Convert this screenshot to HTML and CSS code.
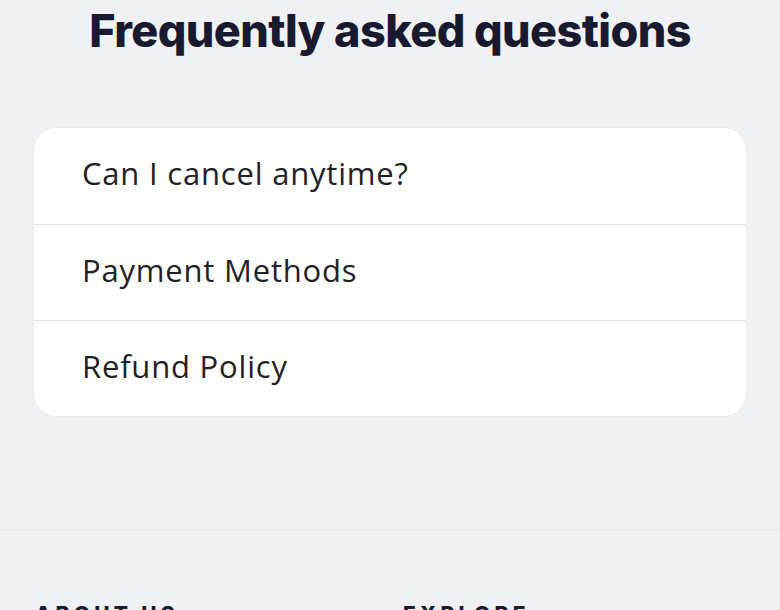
FILE: index.html
```html
<!DOCTYPE html>
<html lang="en">
<head>
<meta charset="utf-8">
<link rel="stylesheet" href="styles.css">
</head>
<body>
<main class="faq">
  <h1 class="faq-title">Frequently asked questions</h1>
  <div class="faq-card">
    <div class="faq-item">Can I cancel anytime?</div>
    <div class="faq-item">Payment Methods</div>
    <div class="faq-item">Refund Policy</div>
  </div>
</main>
<footer class="footer">
  <div class="footer-col"><h3 class="footer-head">About us</h3></div>
  <div class="footer-col"><h3 class="footer-head">Explore</h3></div>
</footer>
</body>
</html>
```

FILE: styles.css
```css
* { box-sizing: border-box; }
html, body { margin: 0; padding: 0; }
body {
  background: #f0f1f5;
  font-family: "Open Sans", "Noto Sans", sans-serif;
  color: #1f1f24;
  overflow: hidden;
  height: 610px;
}
.faq {
  padding: 0 34px 114px;
}
.faq-title {
  margin: 0;
  padding-top: 3px;
  text-align: center;
  font-family: "Inter", sans-serif;
  font-weight: 800;
  font-size: 45px;
  line-height: 56px;
  letter-spacing: -0.6px;
  color: #1a1a2e;
}
.faq-card {
  margin-top: 69px;
  background: #ffffff;
  border-radius: 22px;
  overflow: hidden;
  box-shadow: 0 0 0 1px #e9eaee;
}
.faq-item {
  height: 96px;
  padding: 0 48px 6px;
  display: flex;
  align-items: center;
  font-size: 31px;
  letter-spacing: 0.8px;
  color: #222226;
}
.faq-item + .faq-item { border-top: 1px solid #dedfe2; }
.footer {
  border-top: 1px solid #e5e6ea;
  display: grid;
  grid-template-columns: 368px 1fr;
  padding: 70px 35px 0;
}
.footer-head {
  margin: 0;
  font-family: "Inter", sans-serif;
  font-weight: 800;
  font-size: 21px;
  line-height: 28px;
  letter-spacing: 4.3px;
  text-transform: uppercase;
  color: #1a1a2e;
}
```
